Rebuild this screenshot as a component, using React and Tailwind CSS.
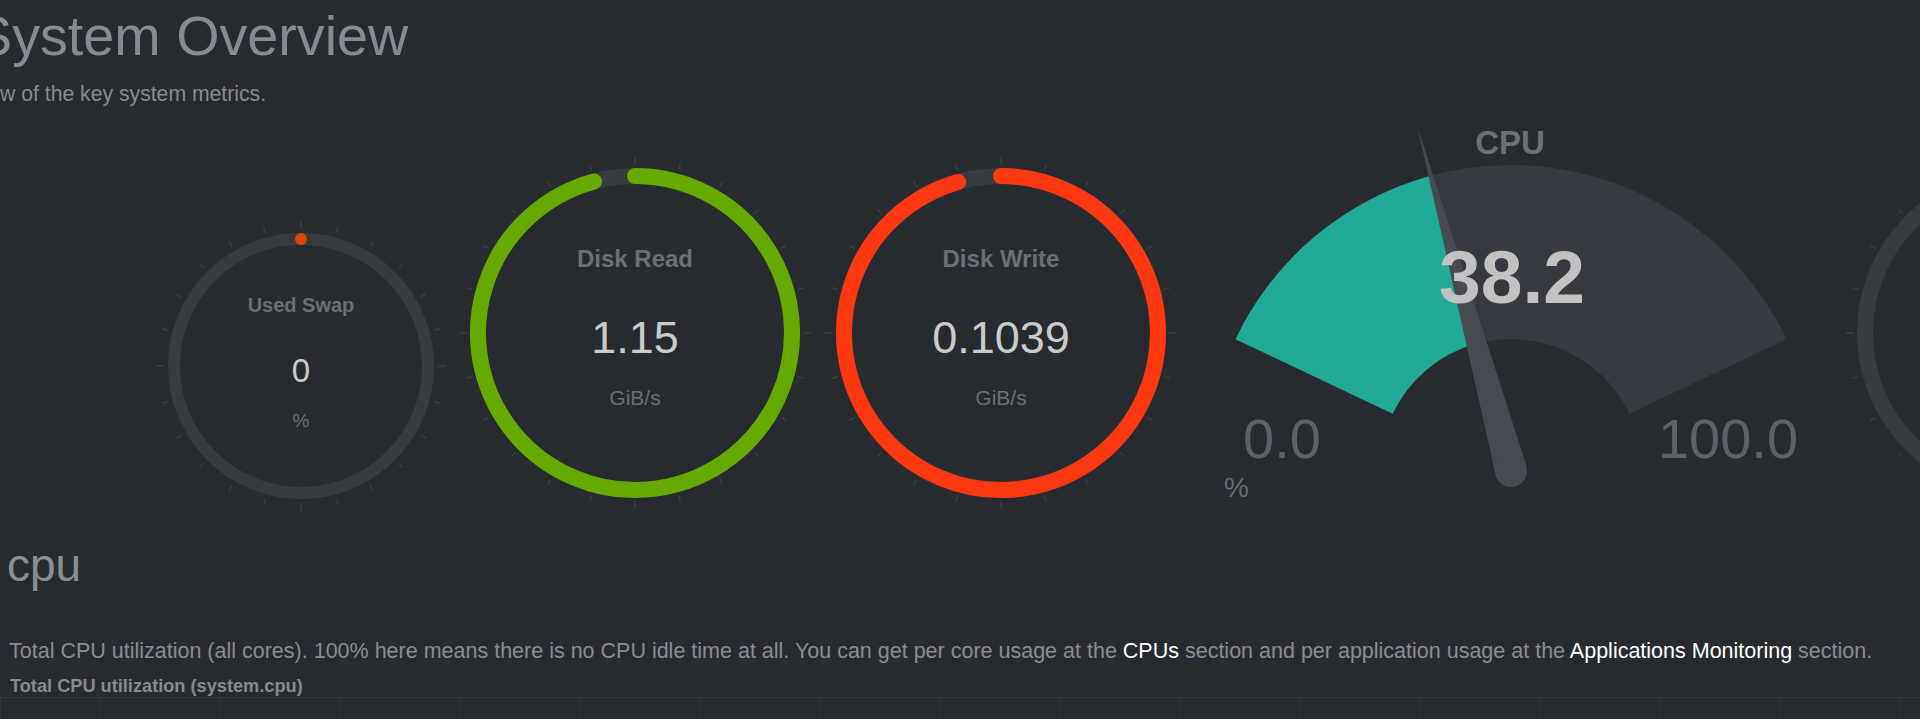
import React from "react";

// ring track + 24 ticks + value arc (easy pie style)
function Pie({ w, cx, cy, r, sw, t1, t2, value, color, children }) {
    const ticks = Array.from({ length: 24 }, (_, i) => {
        const a = (i * 15 * Math.PI) / 180;
        const big = i % 6 === 0;
        const a1 = big ? t1 - 1 : t1;
        const a2 = big ? t2 + 1 : t2;
        return (
            <line
                key={i}
                x1={cx + a1 * Math.sin(a)}
                y1={cy - a1 * Math.cos(a)}
                x2={cx + a2 * Math.sin(a)}
                y2={cy - a2 * Math.cos(a)}
                stroke="#3a3e44"
                strokeWidth={1.5}
            />
        );
    });

    let arc = null;
    if (value != null && color) {
        if (value <= 0.001) {
            arc = <circle cx={cx} cy={cy - r} r={sw / 2} fill={color} />;
        } else {
            const a = value * 2 * Math.PI;
            const x = cx + r * Math.sin(a);
            const y = cy - r * Math.cos(a);
            arc = (
                <path
                    d={`M ${cx} ${cy - r} A ${r} ${r} 0 ${value > 0.5 ? 1 : 0} 1 ${x} ${y}`}
                    fill="none"
                    stroke={color}
                    strokeWidth={sw}
                    strokeLinecap="round"
                />
            );
        }
    }

    return (
        <svg width={w} height={410} className="shrink-0 overflow-visible">
            {ticks}
            <circle cx={cx} cy={cy} r={r} fill="none" stroke="#373b40" strokeWidth={sw} />
            {arc}
            {children}
        </svg>
    );
}

function CpuGauge() {
    const cx = 310;
    const cy = 360;
    const R = 305;
    const r = 131;
    const pt = (rad, deg) => {
        const a = (deg * Math.PI) / 180;
        return `${cx + rad * Math.cos(a)} ${cy - rad * Math.sin(a)}`;
    };
    const band = (d1, d2) =>
        `M ${pt(R, d1)} A ${R} ${R} 0 0 1 ${pt(R, d2)} L ${pt(r, d2)} A ${r} ${r} 0 0 0 ${pt(r, d1)} Z`;

    const start = 154.6;
    const end = 25.4;
    const needle = start - 0.382 * (start - end);
    const na = (needle * Math.PI) / 180;
    const len = 356;
    const hw = 16;
    const tip = [cx + len * Math.cos(na), cy - len * Math.sin(na)];
    const nx = Math.sin(na);
    const ny = Math.cos(na);
    const b1 = [cx + hw * nx, cy + hw * ny];
    const b2 = [cx - hw * nx, cy - hw * ny];

    return (
        <svg width={620} height={410} className="shrink-0 ml-[20px] overflow-visible">
            <path d={band(start, end)} fill="#373a40" />
            <path d={band(start, needle)} fill="#22aa99" />
            <text x={309} y={44} textAnchor="middle" className="text-[33px] font-bold fill-[#6d7075]">
                CPU
            </text>
            <polygon points={`${tip[0]},${tip[1]} ${b1[0]},${b1[1]} ${b2[0]},${b2[1]}`} fill="#474a50" />
            <circle cx={cx} cy={cy + 1} r={hw} fill="#474a50" />
            <text x={311} y={193} textAnchor="middle" className="text-[75px] font-bold fill-[#c2c2c2]">
                38.2
            </text>
            <text x={81} y={348} textAnchor="middle" className="text-[56px] fill-[#5e6167]">
                0.0
            </text>
            <text x={527} y={348} textAnchor="middle" className="text-[56px] fill-[#5e6167]">
                100.0
            </text>
            <text x={23} y={387} className="text-[28px] fill-[#676a70]">
                %
            </text>
        </svg>
    );
}

const GRID_COLS = Array.from({ length: 16 }, (_, i) => i);

export default function App() {
    return (
        <div className="h-[719px] w-full overflow-hidden bg-[#272b30] font-['Liberation_Sans',Arial,sans-serif]">
            <div className="pt-[4px]">
                <h1 className="-ml-[25px] whitespace-nowrap text-[55.7px] leading-[64px] text-[#878a90]">
                    System Overview
                </h1>
                <p className="-ml-[73px] mt-[12px] whitespace-nowrap text-[21.2px] leading-[28px] text-[#878a90]">
                    Overview of the key system metrics.
                </p>

                <div className="mt-[2px] flex items-start">
                    <div className="ml-[151px]">
                        <Pie w={300} cx={150} cy={256} r={127} sw={12} t1={138} t2={144} value={0} color="#dd4400">
                            <text x={150} y={202} textAnchor="middle" className="text-[20px] font-bold fill-[#6c6f75]">
                                Used Swap
                            </text>
                            <text x={150} y={272} textAnchor="middle" className="text-[33px] fill-[#cbcbcb]">
                                0
                            </text>
                            <text x={150} y={317} textAnchor="middle" className="text-[19px] fill-[#6c6f75]">
                                %
                            </text>
                        </Pie>
                    </div>
                    <div className="ml-[4px]">
                        <Pie w={360} cx={180} cy={223} r={157} sw={16} t1={169} t2={175} value={0.958} color="#66aa00">
                            <text x={180} y={157} textAnchor="middle" className="text-[24px] font-bold fill-[#6c6f75]">
                                Disk Read
                            </text>
                            <text x={180} y={243} textAnchor="middle" className="text-[45px] fill-[#cbcbcb]">
                                1.15
                            </text>
                            <text x={180} y={295} textAnchor="middle" className="text-[21px] fill-[#6c6f75]">
                                GiB/s
                            </text>
                        </Pie>
                    </div>
                    <div className="ml-[6px]">
                        <Pie w={360} cx={180} cy={223} r={157} sw={16} t1={169} t2={175} value={0.956} color="#fe3912">
                            <text x={180} y={157} textAnchor="middle" className="text-[24px] font-bold fill-[#6c6f75]">
                                Disk Write
                            </text>
                            <text x={180} y={243} textAnchor="middle" className="text-[45px] fill-[#cbcbcb]">
                                0.1039
                            </text>
                            <text x={180} y={295} textAnchor="middle" className="text-[21px] fill-[#6c6f75]">
                                GiB/s
                            </text>
                        </Pie>
                    </div>
                    <CpuGauge />
                    <div className="ml-[21px]">
                        <Pie w={360} cx={180} cy={223} r={157} sw={16} t1={169} t2={175} />
                    </div>
                </div>

                <h2 className="ml-[7px] mt-[19px] text-[46px] leading-[52px] text-[#8a8d93]">cpu</h2>

                <p className="ml-[9px] mt-[46px] whitespace-nowrap text-[21.5px] leading-[28px] text-[#8a8d93]">
                    Total CPU utilization (all cores). 100% here means there is no CPU idle time at all. You can get per core
                    usage at the <a className="text-white">CPUs</a> section and per application usage at the{" "}
                    <a className="text-white">Applications Monitoring</a> section.
                </p>

                <div className="ml-[10px] mt-[10px] whitespace-nowrap text-[18.2px] font-bold leading-[22px] text-[#878a90]">
                    Total CPU utilization (system.cpu)
                </div>

                <div className="flex items-start">
                    <div className="-ml-[27px] -mt-[3px] w-[30px] text-right text-[13px] leading-[16px] text-[#6c6f75]">100</div>
                    <div className="ml-[5px] flex h-[40px] border-l border-t border-[#30353a]">
                        <div className="w-[99px] shrink-0" />
                        {GRID_COLS.map(i => (
                            <div key={i} className="w-[120px] shrink-0 border-l border-[#30353a]" />
                        ))}
                    </div>
                </div>
            </div>
        </div>
    );
}
